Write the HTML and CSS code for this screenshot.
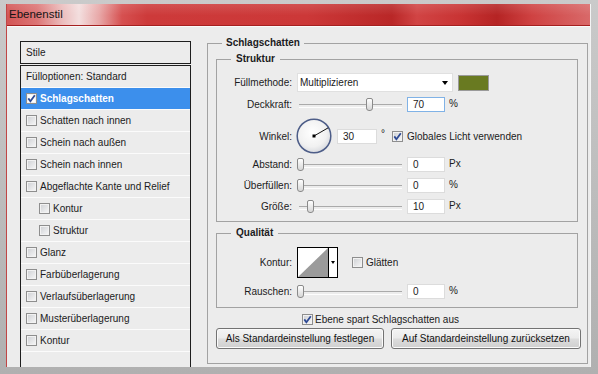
FILE: index.html
```html
<html lang="de">
<head>
    <meta charset="UTF-8">
    <meta name="viewport" content="width=device-width, initial-scale=1.0">
    <title>Ebenenstil</title>
    <link rel="stylesheet" href="styles.css">
</head>
<body>
    <div class="win">
        <div class="titlebar">Ebenenstil</div>
        <div class="main">
            <!-- list of layer styles on the left -->
            <div class="styles-panel">
                <div class="panel-head">Stile</div>
                <ul class="style-list">
                    <li>Fülloptionen: Standard</li>
                    <li class="selected"><span class="cb"><svg width="9" height="9" viewBox="0 0 9 9"><path d="M1.3 4.4 L3.4 7.2 L7.8 1.2" fill="none" stroke="#2e4a94" stroke-width="1.8"/></svg></span>Schlagschatten</li>
                    <li><span class="cb"></span>Schatten nach innen</li>
                    <li><span class="cb"></span>Schein nach außen</li>
                    <li><span class="cb"></span>Schein nach innen</li>
                    <li><span class="cb"></span>Abgeflachte Kante und Relief</li>
                    <li class="sub"><span class="cb"></span>Kontur</li>
                    <li class="sub"><span class="cb"></span>Struktur</li>
                    <li><span class="cb"></span>Glanz</li>
                    <li><span class="cb"></span>Farbüberlagerung</li>
                    <li><span class="cb"></span>Verlaufsüberlagerung</li>
                    <li><span class="cb"></span>Musterüberlagerung</li>
                    <li><span class="cb"></span>Kontur</li>
                </ul>
            </div>

            <div class="group outer">
                <span class="group-title">Schlagschatten</span>

                <div class="group struktur">
                    <span class="group-title">Struktur</span>
                    <div class="row row-mode">
                        <span class="lbl">Füllmethode:</span>
                        <div class="select">Multiplizieren<span class="arrow"></span></div>
                        <span class="swatch"></span>
                    </div>
                    <div class="row row-slide first">
                        <span class="lbl">Deckkraft:</span>
                        <div class="slider"><span class="thumb" style="left: 69px"></span></div>
                        <span class="num focus">70</span>
                        <span class="unit">%</span>
                    </div>
                    <div class="row row-angle">
                        <span class="lbl">Winkel:</span>
                        <svg class="dial" width="36" height="36" viewBox="0 0 36 36">
                            <defs>
                                <radialGradient id="dialfill" cx="0.45" cy="0.4" r="0.6">
                                    <stop offset="0" stop-color="#ffffff"/>
                                    <stop offset="0.7" stop-color="#f1f1f1"/>
                                    <stop offset="1" stop-color="#d9dbe0"/>
                                </radialGradient>
                            </defs>
                            <circle cx="18" cy="18" r="16.8" fill="url(#dialfill)" stroke="#4d5d88" stroke-width="1.5"/>
                            <line x1="18" y1="18" x2="32.2" y2="9.8" stroke="#111" stroke-width="1"/>
                            <rect x="16.5" y="16.5" width="3" height="3" fill="#000"/>
                        </svg>
                        <span class="num wide">30</span>
                        <span class="deg">°</span>
                        <span class="chk-label"><span class="cb"><svg width="9" height="9" viewBox="0 0 9 9"><path d="M1.3 4.4 L3.4 7.2 L7.8 1.2" fill="none" stroke="#2e4a94" stroke-width="1.8"/></svg></span>Globales Licht verwenden</span>
                    </div>
                    <div class="row row-slide tight">
                        <span class="lbl">Abstand:</span>
                        <div class="slider"><span class="thumb" style="left: 0px"></span></div>
                        <span class="num">0</span>
                        <span class="unit">Px</span>
                    </div>
                    <div class="row row-slide">
                        <span class="lbl">Überfüllen:</span>
                        <div class="slider"><span class="thumb" style="left: 0px"></span></div>
                        <span class="num">0</span>
                        <span class="unit">%</span>
                    </div>
                    <div class="row row-slide">
                        <span class="lbl">Größe:</span>
                        <div class="slider"><span class="thumb" style="left: 10px"></span></div>
                        <span class="num">10</span>
                        <span class="unit">Px</span>
                    </div>
                </div>

                <div class="group qualitaet">
                    <span class="group-title">Qualität</span>
                    <div class="row row-contour">
                        <span class="lbl">Kontur:</span>
                        <div class="contour">
                            <svg width="30" height="29" viewBox="0 0 30 29"><rect width="30" height="29" fill="#fff"/><polygon points="0,29 30,0 30,29" fill="#9b9b9b"/></svg>
                            <span class="contour-drop"><span class="arrow"></span></span>
                        </div>
                        <span class="chk-label glatt"><span class="cb"></span>Glätten</span>
                    </div>
                    <div class="row row-slide">
                        <span class="lbl">Rauschen:</span>
                        <div class="slider"><span class="thumb" style="left: 0px"></span></div>
                        <span class="num">0</span>
                        <span class="unit">%</span>
                    </div>
                </div>

                <div class="row-knock">
                    <span class="chk-label"><span class="cb"><svg width="9" height="9" viewBox="0 0 9 9"><path d="M1.3 4.4 L3.4 7.2 L7.8 1.2" fill="none" stroke="#2e4a94" stroke-width="1.8"/></svg></span>Ebene spart Schlagschatten aus</span>
                </div>

                <div class="buttons">
                    <button class="btn btn-set">Als Standardeinstellung festlegen</button>
                    <button class="btn btn-reset">Auf Standardeinstellung zurücksetzen</button>
                </div>
            </div>
        </div>
    </div>
</body>
</html>
```

FILE: styles.css
```css
* {
    box-sizing: border-box;
    margin: 0;
    padding: 0;
}
html, body {
    width: 598px;
    height: 374px;
    overflow: hidden;
}
body {
    background: linear-gradient(#cacaca, #b0b0b0);
    padding: 4px 7px 7px 6px;
    font-family: "Liberation Sans", Arial, sans-serif;
    font-size: 10px;
    color: #1b1b22;
}
.win {
    height: 363px;
    display: flex;
    flex-direction: column;
    background: #ececec;
    border-left: 1px solid #c04646;
    border-right: 1px solid #f4f4f4;
}
.titlebar { /*aero style red title*/
    height: 22px;
    flex-shrink: 0;
    padding-left: 2px;
    font-size: 11.5px;
    line-height: 21px;
    color: #141414;
    border-bottom: 1px solid #a52020;
    background:
        linear-gradient(rgba(255, 255, 255, 0.12), rgba(255, 255, 255, 0) 55%),
        linear-gradient(to right, #d35555 0, #dc7575 30px, #ebbcbc 55px, #f3dede 72px, #e8a8a8 92px, #d65050 115px,
            #cd3a3a 140px, #cc3838 300px, #b92727 385px, #d14444 410px, #c83333 455px, #b52424 490px, #cf4242 525px, #d96a6a 584px);
}
.main {
    flex: 1;
    display: flex;
    gap: 16px;
    padding: 14px 2px 0 13px;
    border-top: 1px solid #fafafa;
}

/* left panel */
.styles-panel {
    width: 171px;
    flex-shrink: 0;
    display: flex;
    flex-direction: column;
}
.panel-head {
    height: 23px;
    border: 1px solid #1e1e1e;
    padding-left: 5px;
    line-height: 21px;
}
.style-list {
    list-style: none;
    flex: 1;
    margin-top: 1px;
    border: 1px solid #1e1e1e;
    border-bottom: none;
}
.style-list li {
    height: 22px;
    display: flex;
    align-items: center;
    gap: 3px;
    padding-left: 5px;
    border-bottom: 1px solid #fbfbfb;
}
.style-list li.sub {
    padding-left: 18px;
}
.style-list li.selected {
    background: #3c8fec;
    color: #fff;
    font-weight: bold;
}
.style-list li.selected .cb {
    background: #fff;
}

/* checkbox */
.cb {
    width: 11px;
    height: 11px;
    flex-shrink: 0;
    display: inline-flex;
    border: 1px solid #8e8e8e;
    background: linear-gradient(135deg, #cdcfd3, #f8f8f8);
    box-shadow: inset 0 0 0 1px #f2f2f2;
}
.chk-label {
    display: flex;
    align-items: center;
    gap: 4px;
    margin-left: 7px;
}

/* group boxes */
.group {
    position: relative;
    border: 1px solid #a2a2a2;
}
.group-title { /*title sits on the top line of the box*/
    position: absolute;
    top: -7px;
    left: 14px;
    padding: 0 5px;
    line-height: 12px;
    font-weight: bold;
    background: #ececec;
}
.outer {
    width: 381px;
    align-self: flex-start;
    margin-top: 2px;
    padding: 15px 9px 14px 8px;
}
.outer > .group-title {
    left: 14px;
    padding: 0 4px;
}
.struktur {
    padding: 13px 0 7px 0;
}
.qualitaet {
    margin-top: 11px;
    padding: 13px 0 8px 0;
}

/* rows */
.row {
    display: flex;
    align-items: center;
}
.lbl {
    width: 75px;
    flex-shrink: 0;
    margin-right: 5px;
    text-align: right;
}
.row-mode {
    height: 19px;
}
.select {
    width: 156px;
    height: 19px;
    display: flex;
    align-items: center;
    justify-content: space-between;
    padding: 0 4px 0 2px;
    background: #fff;
    border: 1px solid #e0e0e0;
}
.arrow {
    width: 0;
    height: 0;
    border-top: 4px solid #000;
    border-left: 3.5px solid transparent;
    border-right: 3.5px solid transparent;
}
.swatch {
    width: 31px;
    height: 16px;
    margin-left: 5px;
    background: #697a21;
    border: 1px solid #9a9a9a;
}
.row-slide {
    height: 15px;
    margin-top: 6px;
}
.row-slide.first {
    margin-top: 5px;
}
.row-slide.tight {
    margin-top: 3px;
}
.slider {
    position: relative;
    width: 105px;
    height: 13px;
    margin-right: 5px;
}
.slider::before {
    content: "";
    position: absolute;
    left: 2px;
    right: 0;
    top: 6px;
    height: 2px;
    border-top: 1px solid #aaaaaa;
    border-bottom: 1px solid #fdfdfd;
}
.thumb { /*slider knob*/
    position: absolute;
    top: 0;
    width: 7px;
    height: 13px;
    border: 1px solid #8a8a8a;
    border-radius: 2px 2px 3px 3px;
    background: linear-gradient(#ffffff, #d6d6d6);
}
.num {
    width: 38px;
    height: 15px;
    padding-left: 5px;
    line-height: 13px;
    background: #fff;
    border: 1px solid #dcdcdc;
}
.num.wide {
    width: 40px;
}
.num.focus {
    border-color: #80b2e6;
}
.unit {
    margin-left: 4px;
    margin-bottom: 3px;
}
.row-angle {
    height: 36px;
    margin-top: 6px;
}
.dial {
    margin-left: -1px;
    margin-right: 5px;
}
.deg {
    margin-left: 4px;
    margin-bottom: 6px;
}

/* quality */
.row-contour {
    height: 31px;
}
.contour {
    width: 41px;
    height: 31px;
    display: flex;
    border: 1px solid #000;
}
.contour svg {
    display: block;
}
.contour-drop {
    flex: 1;
    display: flex;
    align-items: center;
    justify-content: center;
    border-left: 1px solid #000;
    background: #fff;
}
.contour-drop .arrow {
    border-top-width: 3px;
    border-left-width: 2.5px;
    border-right-width: 2.5px;
}
.glatt {
    margin-left: 14px;
    gap: 3px;
}

.row-knock {
    height: 12px;
    margin-top: 5px;
    padding-left: 86px;
    display: flex;
    align-items: center;
}
.row-knock .chk-label {
    margin-left: 0;
    gap: 2px;
}
.buttons {
    display: flex;
    gap: 7px;
    margin-top: 3px;
}
.btn { /*windows 7 push buttons*/
    height: 21px;
    flex-shrink: 0;
    font-family: inherit;
    font-size: 10px;
    color: #111;
    border: 1px solid #737373;
    border-radius: 3px;
    background: linear-gradient(#f4f4f4 0, #ebebeb 48%, #dddddd 52%, #cfcfcf 100%);
    box-shadow: inset 0 0 0 1px #fbfbfb;
}
.btn-set {
    width: 168px;
}
.btn-reset {
    width: 190px;
}
```
